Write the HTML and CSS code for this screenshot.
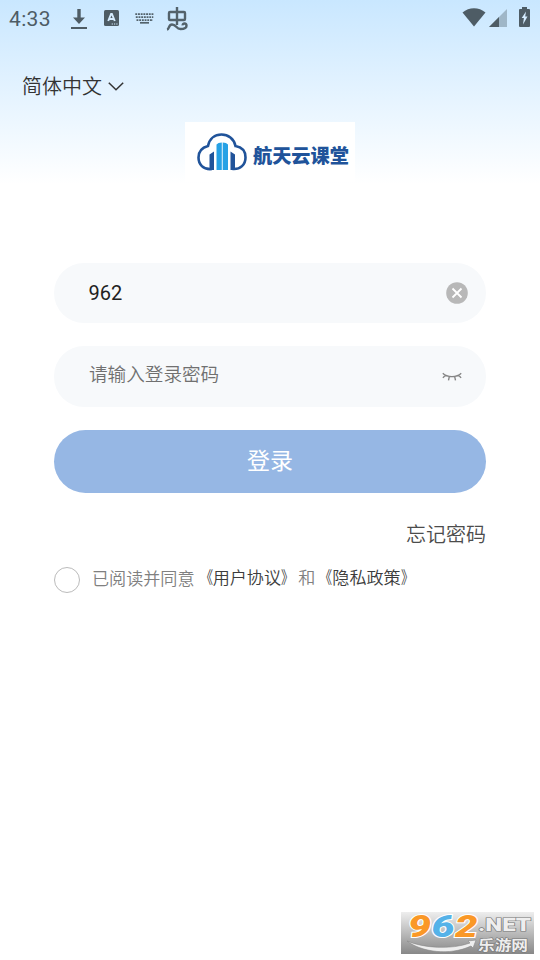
FILE: index.html
```html
<!DOCTYPE html>
<html lang="zh-CN">
<head>
<meta charset="utf-8">
<title>航天云课堂</title>
<link rel="stylesheet" href="styles.css">
</head>
<body>
<header class="status">
  <span class="clock">4:33</span>
  <svg class="download" width="16" height="21" viewBox="0 0 16 21"><path d="M6.300 0h3.400v8.500h4.300L8 15 2 8.500h4.300zM0 18h16v2H0z"/></svg>
  <svg class="input-a" width="15" height="16" viewBox="0 0 15 16"><rect width="15" height="16" rx="1.5"/><path class="cut" d="M4.200 11 7.100 4h.8l2.900 7M5.400 9h4.200"/><path class="dots" d="M7.700 14h1.200M10 14h1.200M12.300 14h1.200"/></svg>
  <svg class="keyboard" width="19" height="11" viewBox="0 0 19 11"><path d="M.3 1.200h18.500M.8 4.200h17.500M1.500 7.200h16.500" stroke-dasharray="1.900 .8"/><path d="M5 9.800h9"/></svg>
  <svg class="bug" width="22" height="24" viewBox="0 0 22 24"><path d="M11 0v18M4 5h14q1 0 1 1v6q0 1-1 1H4q-1 0-1-1V6q0-1 1-1zM1 22.500c2.500-.5 1.500-5 5-5 4.500 0 4 4.500 8.500 4.500 3.500 0 6-.5 6-3.200 0-3-4-2.800-3.800-.5"/></svg>
  <span class="spacer"></span>
  <svg class="wifi" width="24" height="19" viewBox="0 0 24 19"><path d="M.5 4.500C7-1.300 17-1.300 23.500 4.500L12 18.500z"/></svg>
  <svg class="signal" width="18" height="19" viewBox="0 0 18 19"><path class="weak" d="M18 0v18H0z"/><path d="M10 8v10H0z"/></svg>
  <svg class="battery" width="11" height="20" viewBox="0 0 11 20"><path d="M3 0h5v2h2q1 0 1 1v16q0 1-1 1H1q-1 0-1-1V3q0-1 1-1h2z"/><path class="bolt" d="M7 4.500 2.700 11h2.200L4 17.500 8.500 9.500H6.200z"/></svg>
</header>
<main>
  <div class="language"><span>简体中文</span><svg width="16" height="9" viewBox="0 0 16 9"><path d="m.8.8 7.200 7 7.200-7"/></svg></div>
  <div class="brand">
    <svg class="cloud" width="50" height="38" viewBox="0 0 50 38">
      <path class="outline" d="M15 36C6 37 1.500 31 1.500 24.500 1.500 18 5.500 14.500 11 13 12.500 5.500 18 1.500 24.500 1.500S37 5.500 38.500 13c6 1 10 5 10 11.500 0 7-5 12.200-13 11.500"/>
      <path class="dark" d="m12.500 21.500 4.500-3V37h-4.500zM33.500 18.500l4.500 3V37h-4.500z"/>
      <path class="light" d="M19.500 11.500q1.500-2 5.300-2V37h-5.300zM25.700 9.500q3.800 0 5.300 2V37h-5.300z"/>
    </svg>
    <span>航天云课堂</span>
  </div>
  <div class="field account"><span>962</span>
    <svg width="22" height="22" viewBox="0 0 22 22"><circle cx="11" cy="11" r="10.800"/><path d="m6.500 6.500 9 9m0-9-9 9"/></svg>
  </div>
  <div class="field password"><span>请输入登录密码</span>
    <svg width="20" height="10" viewBox="0 0 20 10"><path d="M.8 1.200C5 5.700 15 5.700 19.200 1.200M3.300 3.200.9 5.900M7.300 4.700 6.500 8.300M12.700 4.700l.8 3.600M16.700 3.200l2.400 2.700"/></svg>
  </div>
  <div class="login">登录</div>
  <div class="forgot">忘记密码</div>
  <div class="agreement"><i class="radio"></i><span class="read">已阅读并同意</span><span class="terms"><b><i class="open">《</i>用户协议<i class="close">》</i></b>和<b><i class="open">《</i>隐私政策<i class="close">》</i></b></span></div>
</main>
<footer class="watermark">
  <svg width="133" height="42" viewBox="0 0 133 42">
    <g class="digits"><text class="orange" x="7" y="25" textLength="23" lengthAdjust="spacingAndGlyphs">9</text><text class="blue" x="30.500" y="25" textLength="23" lengthAdjust="spacingAndGlyphs">6</text><text class="orange" x="54" y="25" textLength="22.500" lengthAdjust="spacingAndGlyphs">2</text></g>
    <text class="net" x="77" y="19" textLength="53" lengthAdjust="spacingAndGlyphs">.NET</text>
    <path class="swoosh" d="M6 29c16 7 44 9 63 2l-2-2 8-1-3 8-2-2C49 44 20 40 6 29z"/>
    <text class="site" x="77" y="38" textLength="50" lengthAdjust="spacingAndGlyphs">乐游网</text>
  </svg>
</footer>
</body>
</html>
```
FILE: styles.css
```css
* { box-sizing: border-box; }
body {
  margin: 0;
  width: 540px;
  height: 960px;
  display: flex;
  flex-direction: column;
  overflow: hidden;
  color: #333;
  background: #fff linear-gradient(#c9e7ff 0, #fff 184px) no-repeat;
  font-family: Roboto, "Noto Sans CJK SC", sans-serif;
}
svg { display: block; flex: none; overflow: visible; }
.status { height: 38px; padding: 0 10px 0 9px; display: flex; align-items: flex-start; fill: #4e5c65; color: #4e5c65; }
.clock { width: 62px; font-size: 21px; line-height: 38px; letter-spacing: .35px; }
.download { margin: 9px 0 0 0; }
.input-a { margin: 10px 0 0 17px; }
.cut { fill: none; stroke: #d5ecff; stroke-width: 1.9; }
.dots { stroke: #d5ecff; stroke-width: 1; }
.keyboard { margin: 13px 0 0 16px; fill: none; stroke: #53626b; stroke-width: 1.7; }
.bug { margin: 7px 0 0 12px; fill: none; stroke: #53626b; stroke-width: 2.4; }
.spacer { flex: 1; }
.wifi { margin: 8px 3px 0 0; }
.signal { margin: 9px 12px 0 0; }
.weak { fill: #9fb6c7; }
.battery { margin-top: 7px; }
.bolt { fill: #d5ecff; }
main { flex: 1; padding: 0 54px; display: flex; flex-direction: column; }
.language { margin: 33px 0 0 -32px; height: 30px; display: flex; align-items: center; gap: 6px; font-size: 20px; line-height: 30px; font-weight: 350; }
.language span, .forgot { font-family: "Noto Sans CJK SC", sans-serif; }
.language svg { fill: none; stroke: #333; stroke-width: 1.5; }
.brand { width: 170px; height: 60px; margin: 21px auto 0; padding: 11px 0 0 12px; background: #fff; display: flex; gap: 6px; color: #20539a; }
.brand span { font: 900 19.200px/45px "Noto Sans CJK SC", sans-serif; white-space: nowrap; }
.outline { fill: none; stroke: #20539a; stroke-width: 2.6; }
.dark { fill: #20539a; }
.light { fill: #26a1e5; }
.field { height: 60px; border-radius: 30px; background: #f7f9fb; padding: 0 18px 0 34.500px; display: flex; align-items: center; justify-content: space-between; }
.account { margin-top: 81px; font-size: 20px; color: #222; }
.account circle { fill: #b8b8b8; }
.account path { stroke: #fff; stroke-width: 1.8; }
.password { margin-top: 23px; height: 61px; padding-right: 24.500px; padding-left: 35px; font-size: 18.600px; color: #707070; font-weight: 350; }
.password span { margin-top: -8px; }
.password path { fill: none; stroke: #858585; stroke-width: 1.4; }
.login { height: 63px; margin-top: 23px; border-radius: 32px; background: #96b7e4; color: #fff; text-align: center; font-size: 23px; line-height: 63px; }
.forgot { margin-top: 26px; text-align: right; font-size: 20px; line-height: 30px; color: #4c4c4c; font-weight: 350; }
.agreement { margin-top: 16.500px; height: 28px; display: flex; align-items: center; font-size: 17.100px; line-height: 28px; color: #808080; white-space: nowrap; font-weight: 350; }
.radio { width: 26px; height: 26px; margin-right: 12px; border: 1px solid #bbb; border-radius: 50%; }
.read { margin-top: -2px; }
.terms { margin: -4px 0 0 1px; }
.terms b { font-weight: 350; color: #3c3c3c; }
.terms i { display: inline-block; font-style: normal; transform: scaleX(.75); }
.open { transform-origin: 100% 50%; }
.close { transform-origin: 0 50%; }
.watermark { width: 133px; height: 42px; margin: 0 6px 6px auto; background: linear-gradient(#eee, #888); }
.watermark text { stroke: #fff; paint-order: stroke; }
.digits { font: italic 900 32px Roboto, sans-serif; }
.digits text { stroke-width: 2px; }
.orange { fill: #fa9827; }
.blue { fill: #55b2e8; }
.watermark .net { font: 900 18px Roboto, sans-serif; fill: #eee; stroke: #777; stroke-width: 1.200px; }
.watermark .site { font: 700 14px "Noto Sans CJK SC", sans-serif; fill: #eee; stroke: #777; stroke-width: 1.200px; }
.swoosh { fill: #eee; stroke: #888; stroke-width: .6; }
```
